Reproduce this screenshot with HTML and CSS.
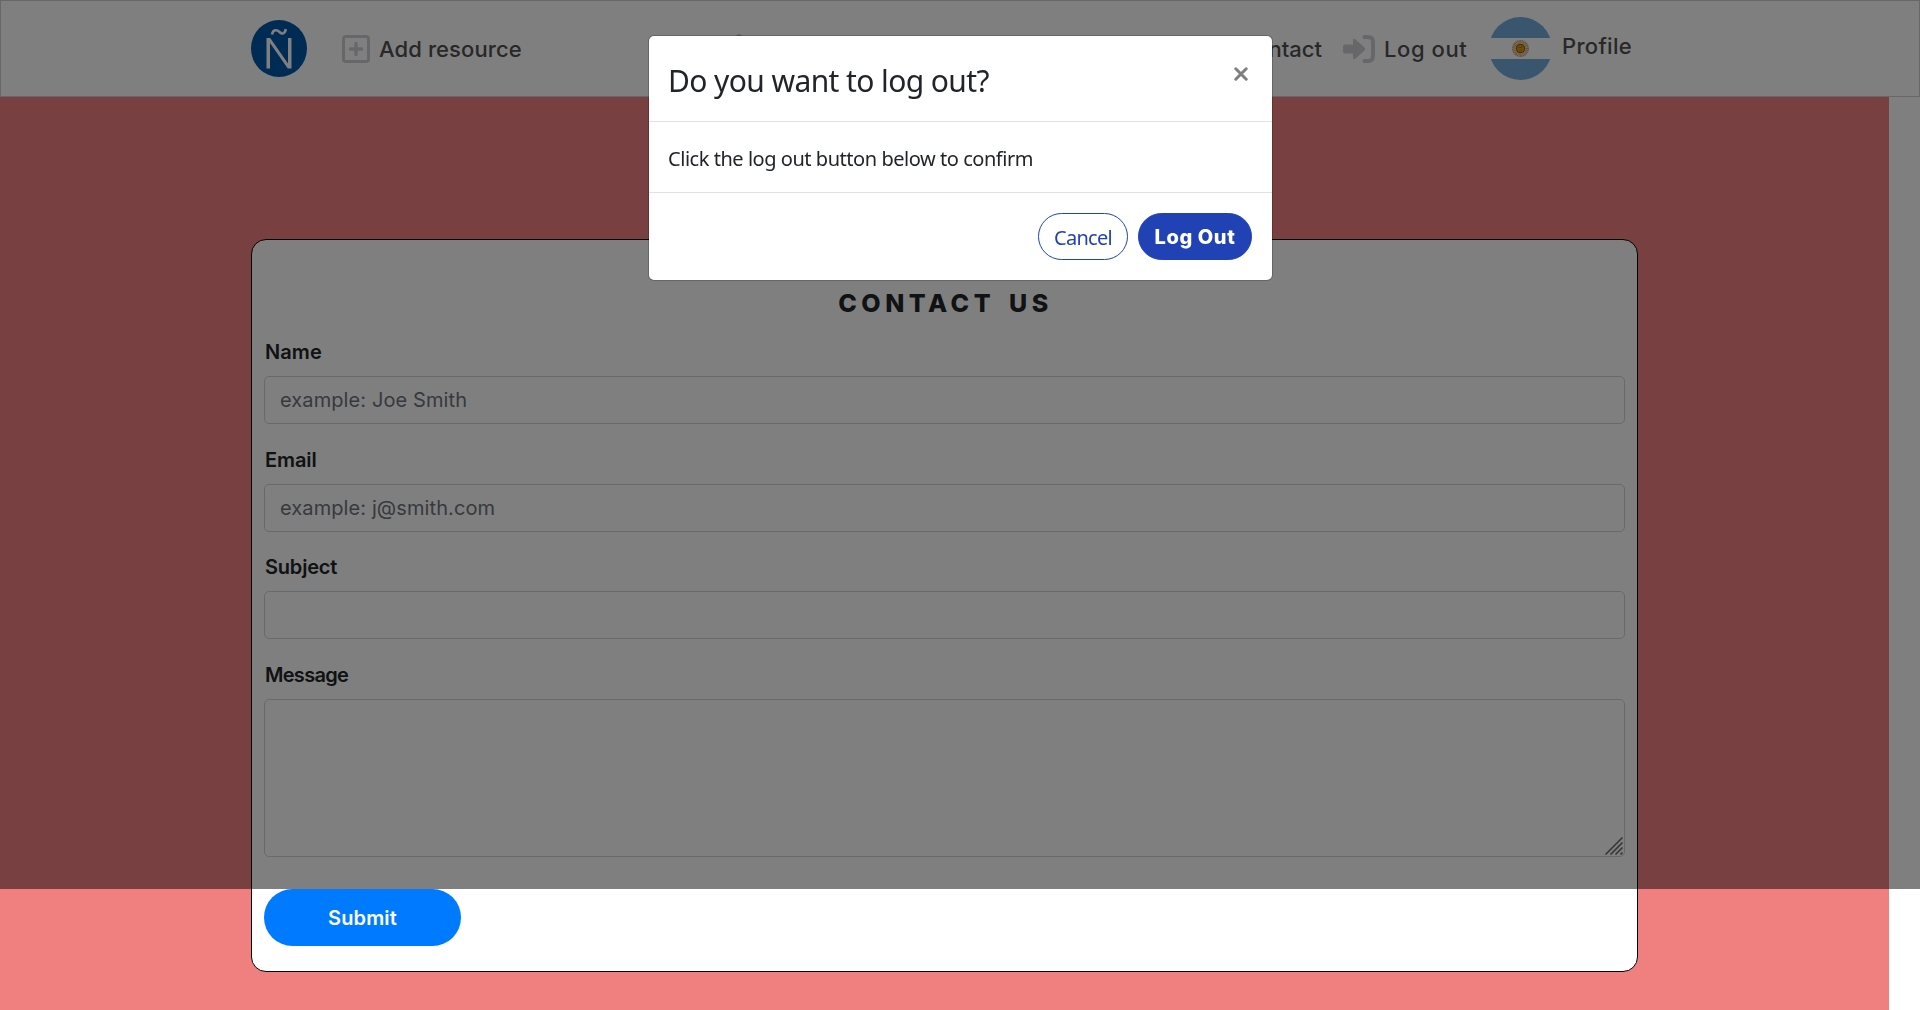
FILE: index.html
```html
<!DOCTYPE html>
<html lang="en">
<head>
<meta charset="utf-8">
<title>Contact us</title>
<link rel="stylesheet" href="styles.css">
</head>
<body>
<header class="navbar">
  <a class="logo" aria-label="Home">
    <svg width="56" height="57" viewBox="0 0 56 57"><ellipse cx="28" cy="28.5" rx="28" ry="28.5" fill="#0056ab"/><path d="M15.500 48.500V18H19.200L37 43.500V18H40.500V48.500H36.800L19 23V48.500z" fill="#fff"/><path d="M21 14.5C22 9 26 9.5 28.5 12S34 14 34.800 9" fill="none" stroke="#fff" stroke-width="2.600"/></svg>
  </a>
  <a class="nav-item add">
    <svg width="28" height="28" viewBox="0 0 28 28" fill="none" stroke="#cfcfd3"><rect x="1.5" y="1.500" width="25" height="25" rx="2.500" stroke-width="3"/><path d="M14 8.500v11M8.500 14h11" stroke-width="3.400" stroke-linecap="round"/></svg>
    <span class="t-add">Add resource</span>
  </a>
  <svg class="home-icon" width="36" height="32" viewBox="0 0 36 32"><path d="M2 16L16 1.500Q18 0 20 1.500L34 16H30V30H6V16z" fill="#cfcfd3"/></svg>
  <a class="nav-item contact"><span class="t-contact">Contact</span></a>
  <a class="nav-item logout">
    <svg width="32" height="28" viewBox="0 0 32 28"><path d="M2 9.500h8V5.500q0-3 2.500-1L21.500 12.500q1.500 1.500 0 3L12.500 23.500q-2.500 2-2.500-1V18.500H2q-2 0-2-2v-5q0-2 2-2z" fill="#cfcfd3"/><path d="M21.500 2H25q5 0 5 5V21q0 5-5 5H21.500" fill="none" stroke="#cfcfd3" stroke-width="4" stroke-linecap="round"/></svg>
    <span class="t-logout">Log out</span>
  </a>
  <a class="nav-item profile">
    <svg width="63" height="63" viewBox="0 0 63 63"><defs><clipPath id="disc"><circle cx="31.500" cy="31.500" r="31.500"/></clipPath></defs><g clip-path="url(#disc)"><path fill="#fff" d="M0 0h63v63H0z"/><path fill="#74acdf" d="M0 0h63v21H0zM0 42h63v21H0z"/></g><circle cx="31.500" cy="31.500" r="6.800" fill="none" stroke="#b87528" stroke-width="3.500" stroke-dasharray="1 .434" opacity=".65"/><circle cx="31.500" cy="31.500" r="4.800" fill="#9a5a10"/><circle cx="31.500" cy="31.500" r="3.600" fill="#e0a010"/><path d="M29.500 30.500h4M30.500 33h2" stroke="#a86a10" stroke-width=".9"/></svg>
    <span class="t-profile">Profile</span>
  </a>
</header>
<main class="page">
  <form class="card">
    <h1>CONTACT US</h1>
    <div class="group"><label class="l-name" for="name">Name</label><input id="name" placeholder="example: Joe Smith"></div>
    <div class="group"><label class="l-email" for="email">Email</label><input id="email" placeholder="example: j@smith.com"></div>
    <div class="group"><label class="l-subject" for="subject">Subject</label><input id="subject"></div>
    <div class="group"><label class="l-message" for="message">Message</label>
      <div class="area"><textarea id="message"></textarea><svg class="grip" width="18" height="18" viewBox="0 0 18 18"><path d="M.5 17.500L17.500 .5M5.500 17.500L17.500 5.500M10.500 17.500L17.500 10.500M15.500 17.500L17.500 15.500" stroke="#666" stroke-width="1.500"/></svg></div>
    </div>
    <button class="submit" type="button">Submit</button>
  </form>
</main>
<div class="backdrop">
  <section class="modal" role="dialog">
    <header class="modal-header">
      <h2>Do you want to log out?</h2>
      <svg class="close" width="14" height="14" viewBox="0 0 14 14"><path d="M1.800 1.800L12.200 12.200M12.200 1.800L1.800 12.200" stroke="#7f7f7f" stroke-width="3" stroke-linecap="round"/></svg>
    </header>
    <div class="modal-body"><span>Click the log out button below to confirm</span></div>
    <footer class="modal-footer">
      <button class="cancel" type="button">Cancel</button>
      <button class="confirm" type="button">Log Out</button>
    </footer>
  </section>
</div>
</body>
</html>
```
FILE: styles.css
```css
* { box-sizing: border-box; }
html, body { height: 100%; }
body {
  margin: 0;
  overflow: hidden;
  background: #fff;
  color: #212529;
  font: 20px/30px Inter, "Noto Sans", sans-serif;
}
svg { display: block; flex: none; }

.navbar {
  display: flex;
  align-items: flex-start;
  height: 97px;
  padding-left: 250px;
  border: 1px solid #cfcfd3;
}
.logo { margin-top: 19px; }
.nav-item {
  display: flex;
  align-items: center;
  height: 30px;
  margin-top: 33px;
  font-size: 22px;
  font-weight: 500;
  color: #505050;
  white-space: nowrap;
}
.add { width: 379px; margin-left: 35px; gap: 9px; }
.t-add { letter-spacing: .1px; }
.home-icon { margin-top: 32px; }
.contact { width: 87px; margin-left: 478px; justify-content: flex-end; }
.logout { width: 146px; margin-left: 21px; gap: 9px; }
.t-logout { letter-spacing: .6px; }
.profile { height: 63px; margin-top: 16px; gap: 10px; }
.t-profile { margin-top: -5px; letter-spacing: .3px; }

.page {
  width: 1889px;
  height: 913px;
  padding: 142px 251px 0;
  background: #f08080;
}
.card {
  height: 733px;
  padding: 45px 12px 0;
  background: #fff;
  border: 1px solid #000;
  border-radius: 15px;
}
h1 {
  margin: 0 0 16px;
  padding-left: 2px;
  font-size: 25px;
  line-height: 36px;
  font-weight: 800;
  letter-spacing: 4.500px;
  word-spacing: 4px;
  text-align: center;
}
.group { height: 107.600px; }
label {
  display: block;
  width: max-content;
  height: 39px;
  padding-left: 1px;
  font-weight: 600;
}
.l-name { letter-spacing: .1px; }
.l-email { letter-spacing: -.1px; }
.l-subject { letter-spacing: -.2px; }
.l-message { letter-spacing: -.7px; }
input, textarea {
  display: block;
  width: 100%;
  height: 48px;
  margin: 0;
  padding: 0 15px;
  border: 1px solid #ced4da;
  border-radius: 5px;
  background: #fff;
  font: inherit;
  letter-spacing: .1px;
}
input::placeholder { color: #6c757d; opacity: 1; }
.area { position: relative; }
textarea { height: 158px; resize: none; }
.grip { position: absolute; right: 2px; bottom: 2px; }
.submit {
  display: block;
  width: 197px;
  height: 57px;
  margin-top: 122px;
  border: 0;
  border-radius: 29px;
  background: #007bff;
  color: #fff;
  font: 600 20px Inter, sans-serif;
  letter-spacing: .15px;
}

.backdrop {
  position: fixed;
  inset: 0 0 auto;
  height: 889px;
  padding: 35px 0 0 648px;
  background: rgba(0, 0, 0, .5);
}
.modal {
  width: 625px;
  height: 246px;
  background: #fff;
  background-clip: padding-box;
  border: 1px solid rgba(0, 0, 0, .2);
  border-radius: 6px;
  font-family: "Noto Sans", sans-serif;
}
.modal-header {
  display: flex;
  justify-content: space-between;
  height: 86px;
  padding: 20px 24px 20px 19px;
  border-bottom: 1px solid #dee2e6;
}
h2 {
  margin: 2px 0 0;
  font-size: 30px;
  line-height: 45px;
  font-weight: 400;
  letter-spacing: -.6px;
  white-space: nowrap;
}
.close { margin-top: 11px; }
.modal-body {
  height: 70px;
  padding: 22px 19px 18px;
  letter-spacing: -.46px;
  white-space: nowrap;
}
.modal-footer {
  display: flex;
  justify-content: flex-end;
  gap: 10px;
  padding: 20px 20px 0;
  border-top: 1px solid #dee2e6;
}
.modal-footer button {
  height: 47px;
  border: 1px solid #2142b5;
  border-radius: 24px;
  white-space: nowrap;
}
.cancel {
  width: 90px;
  padding: 2px 0 0;
  background: #fff;
  color: #2142b5;
  font: 20px "Noto Sans", sans-serif;
  letter-spacing: -.7px;
}
.confirm {
  width: 114px;
  padding: 0;
  background: #2142b5;
  color: #fff;
  font: 800 20px Inter, sans-serif;
  letter-spacing: .6px;
}
```
